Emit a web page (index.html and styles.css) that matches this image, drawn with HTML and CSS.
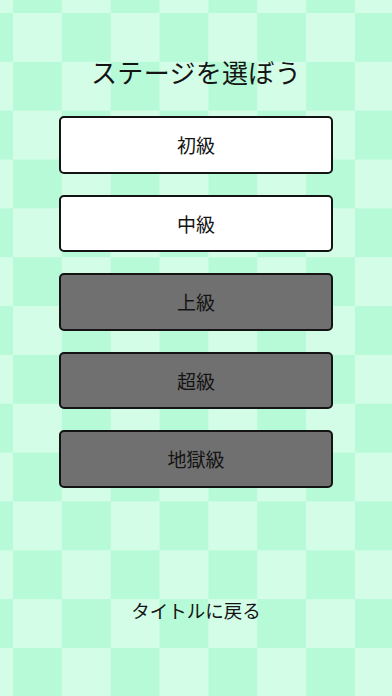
FILE: index.html
```html
<!DOCTYPE html>
<html lang="ja">
<head>
<meta charset="utf-8">
<title>ステージを選ぼう</title>
<link rel="stylesheet" href="styles.css">
</head>
<body>
<main class="screen">
  <h1 class="title">ステージを選ぼう</h1>
  <div class="stages">
    <button class="stage stage-open">初級</button>
    <button class="stage stage-open">中級</button>
    <button class="stage stage-locked">上級</button>
    <button class="stage stage-locked">超級</button>
    <button class="stage stage-locked">地獄級</button>
  </div>
  <button class="back">タイトルに戻る</button>
</main>
</body>
</html>
```

FILE: styles.css
```css
html, body {
  margin: 0;
  padding: 0;
}

body {
  width: 392px;
  height: 696px;
  overflow: hidden;
  font-family: "Noto Sans CJK JP", "Noto Sans", sans-serif;
  color: #141414;
  background-color: #d4fde8;
  background-image: repeating-conic-gradient(#b7fad7 0 25%, #d4fde8 0 50%);
  background-size: 97.7px 97.7px;
  background-position: -35.85px -35.85px;
}

.screen {
  height: 696px;
  display: flex;
  flex-direction: column;
  align-items: center;
}

.title {
  margin: 54px 0 0;
  font-size: 26px;
  line-height: 36px;
  font-weight: 400;
  letter-spacing: 0.3px;
}

.stages {
  margin-top: 26px;
  width: 274px;
  display: flex;
  flex-direction: column;
  gap: 21px;
}

.stage {
  height: 57.5px;
  box-sizing: border-box;
  border: 2px solid #141414;
  border-radius: 5px;
  display: flex;
  align-items: center;
  justify-content: center;
  font-family: inherit;
  font-size: 19px;
  color: #141414;
  padding: 0;
}

.stage-open {
  background: #ffffff;
}

.stage-locked {
  background: #707070;
}

.back {
  margin-top: 109.5px;
  border: none;
  background: none;
  padding: 0;
  font-family: inherit;
  font-size: 18.5px;
  line-height: 26px;
  color: #141414;
}
```
